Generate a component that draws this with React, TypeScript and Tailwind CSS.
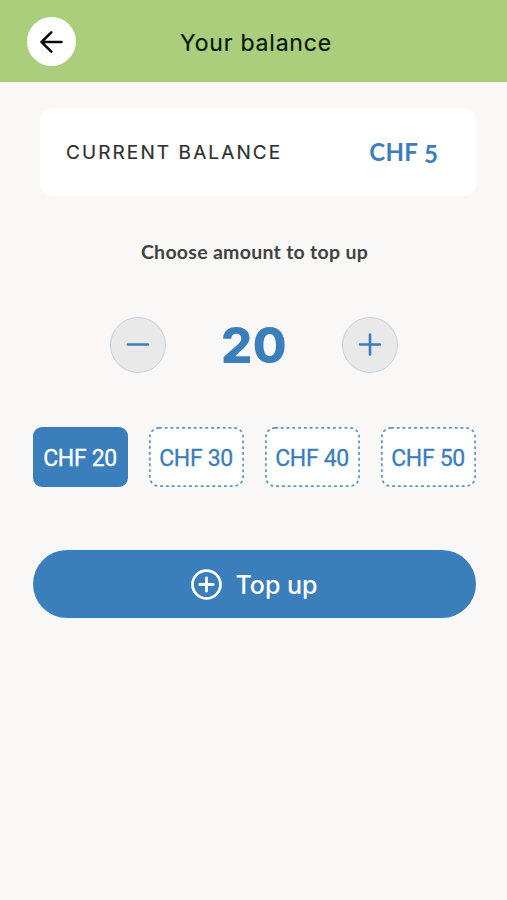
import { useState } from 'react'
import clsx from 'clsx'

const AMOUNTS = [20, 30, 40, 50]
const STEP = 10

interface RoundButtonProps {
  label: string
  path: string
  onClick: () => void
}

/**
 * Round stepper button on either side of the amount
 */
function RoundButton({ label, path, onClick }: RoundButtonProps) {
  return (
    <button
      type="button"
      aria-label={label}
      onClick={onClick}
      className="flex size-14 items-center justify-center rounded-full border border-[#c5d3e0] bg-[#e9e9e9] text-[#3a7ebc]"
    >
      <svg width="24" height="24" viewBox="0 0 24 24" fill="none" stroke="currentColor" strokeWidth="2.6" strokeLinecap="round">
        <path d={path} />
      </svg>
    </button>
  )
}

interface AmountOptionProps {
  amount: number
  selected: boolean
  onSelect: () => void
}

function AmountOption({ amount, selected, onSelect }: AmountOptionProps) {
  return (
    <button
      type="button"
      onClick={onSelect}
      className={clsx(
        "relative flex h-[60px] w-[95px] items-center justify-center rounded-[9px] pr-px pt-[4px] font-['Roboto',sans-serif] text-[23px] tracking-[-0.35px] [-webkit-text-stroke:0.3px]",
        selected ? 'bg-[#3a7ebc] text-white' : 'bg-white text-[#3a7ebc]'
      )}
    >
      {!selected && (
        <svg className="absolute inset-0" width="95" height="60" fill="none">
          <rect x="0.9" y="0.9" width="93.2" height="58.2" rx="9" stroke="#5b93c8" strokeWidth="1.7" strokeDasharray="2.9 2.9" />
        </svg>
      )}
      CHF {amount}
    </button>
  )
}

export default function App() {
  const [amount, setAmount] = useState(20)

  return (
    <div className="min-h-[900px] w-full bg-[#f9f8f6] font-['Inter',sans-serif]">
      <header className="grid h-[82px] grid-cols-[1fr_auto_1fr] items-center bg-[#aace7c] pl-[27px] pr-[22px]">
        <button type="button" aria-label="Back" className="flex size-[49px] items-center justify-center rounded-full bg-white">
          <svg width="24" height="24" viewBox="0 0 24 24" fill="none" stroke="#080808" strokeWidth="2.5" strokeLinecap="round" strokeLinejoin="round">
            <path d="M21.5 13H1.5M11.3 3.3L1.5 13L11.3 22.7" />
          </svg>
        </button>
        <h1 className="pt-1 text-[23px] tracking-[0.8px] text-[#07170a] [-webkit-text-stroke:0.2px]">Your balance</h1>
      </header>

      <main className="flex flex-col pl-[33px] pr-[31px] pt-[26px]">
        <section className="ml-[7px] flex h-[88px] items-center justify-between rounded-xl bg-white pl-[26px] pr-[38px]">
          <span className="pt-0.5 text-[19px] tracking-[2.1px] text-[#303030] [-webkit-text-stroke:0.2px]">CURRENT BALANCE</span>
          <span className="flex items-baseline gap-[6px] font-['Lato',sans-serif] text-[24px] font-bold text-[#3a7ebc]">
            <span className="tracking-[0.3px]">CHF</span>
            <span className="relative top-0.5">5</span>
          </span>
        </section>

        <p className="mt-[42px] text-center font-['Lato',sans-serif] text-[19.5px] font-bold leading-7 tracking-[0.28px] text-[#424242]">
          Choose amount to top up
        </p>

        <div className="mt-[51px] flex items-center justify-between pl-[77px] pr-[78px]">
          <RoundButton label="Decrease" path="M2 11.5H22" onClick={() => setAmount(Math.max(STEP, amount - STEP))} />
          <span className="pt-0.5 text-[49px] font-extrabold leading-[54px] tracking-[0.5px] text-[#3a7ebc]">{amount}</span>
          <RoundButton label="Increase" path="M2 11.5H22M12 1.5V21.5" onClick={() => setAmount(amount + STEP)} />
        </div>

        <div className="mt-[54px] flex justify-between">
          {AMOUNTS.map((value) => (
            <AmountOption key={value} amount={value} selected={value === amount} onSelect={() => setAmount(value)} />
          ))}
        </div>

        <button
          type="button"
          className="mt-[63px] flex h-[68px] items-center justify-center gap-[13px] rounded-full bg-[#3a7ebc] text-[25px] font-medium text-white"
        >
          <svg width="31" height="31" viewBox="0 0 30 30" fill="none" stroke="currentColor" strokeWidth="2.7" strokeLinecap="round">
            <circle cx="15" cy="15" r="13.5" />
            <path d="M8.5 15H21.5M15 8.5V21.5" />
          </svg>
          <span className="pt-1">Top up</span>
        </button>
      </main>
    </div>
  )
}
